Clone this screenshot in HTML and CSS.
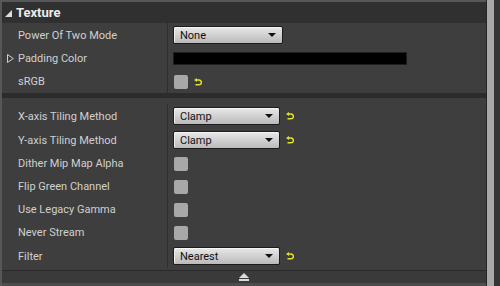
FILE: index.html
```html
<!DOCTYPE html>
<html lang="en">

<head>
    <meta charset="UTF-8">
    <title>Texture</title>
    <link rel="stylesheet" href="styles.css">
</head>

<body>
    <div class="panel">
        <div class="main">

            <!-- category header -->
            <div class="header"><span class="caret"></span>Texture</div>

            <!-- basic group -->
            <div class="group">
                <div class="row tall">
                    <div class="label">Power Of Two Mode</div>
                    <div class="value">
                        <div class="combo wide"><span>None</span><i class="arrow"></i></div>
                    </div>
                </div>
                <div class="row">
                    <div class="label">
                        <svg class="expander" width="7" height="9" viewBox="0 0 7 9">
                            <polygon points="0.5,0.5 6.3,4.5 0.5,8.5" fill="none" stroke="#cfcfcf" stroke-width="1" />
                        </svg>
                        Padding Color
                    </div>
                    <div class="value"><div class="swatch"></div></div>
                </div>
                <div class="row">
                    <div class="label">sRGB</div>
                    <div class="value">
                        <div class="check"></div>
                        <svg class="reset" width="8" height="8" viewBox="0 0 8 8">
                            <polygon points="0,2 3,0 3,4" fill="#e2e22a" />
                            <path d="M2.5 2 H5 A2.4 2.4 0 0 1 5 6.8 H1.5" fill="none" stroke="#e2e22a" stroke-width="1.5" />
                        </svg>
                    </div>
                </div>
            </div>

            <div class="sep"></div>

            <!-- advanced group -->
            <div class="group advanced">
                <div class="row tall">
                    <div class="label">X-axis Tiling Method</div>
                    <div class="value">
                        <div class="combo"><span>Clamp</span><i class="arrow"></i></div>
                        <svg class="reset" width="8" height="8" viewBox="0 0 8 8">
                            <polygon points="0,2 3,0 3,4" fill="#e2e22a" />
                            <path d="M2.5 2 H5 A2.4 2.4 0 0 1 5 6.8 H1.5" fill="none" stroke="#e2e22a" stroke-width="1.5" />
                        </svg>
                    </div>
                </div>
                <div class="row tall">
                    <div class="label">Y-axis Tiling Method</div>
                    <div class="value">
                        <div class="combo"><span>Clamp</span><i class="arrow"></i></div>
                        <svg class="reset" width="8" height="8" viewBox="0 0 8 8">
                            <polygon points="0,2 3,0 3,4" fill="#e2e22a" />
                            <path d="M2.5 2 H5 A2.4 2.4 0 0 1 5 6.8 H1.5" fill="none" stroke="#e2e22a" stroke-width="1.5" />
                        </svg>
                    </div>
                </div>
                <div class="row">
                    <div class="label">Dither Mip Map Alpha</div>
                    <div class="value"><div class="check"></div></div>
                </div>
                <div class="row">
                    <div class="label">Flip Green Channel</div>
                    <div class="value"><div class="check"></div></div>
                </div>
                <div class="row">
                    <div class="label">Use Legacy Gamma</div>
                    <div class="value"><div class="check"></div></div>
                </div>
                <div class="row">
                    <div class="label">Never Stream</div>
                    <div class="value"><div class="check"></div></div>
                </div>
                <div class="row tall">
                    <div class="label">Filter</div>
                    <div class="value">
                        <div class="combo"><span>Nearest</span><i class="arrow"></i></div>
                        <svg class="reset" width="8" height="8" viewBox="0 0 8 8">
                            <polygon points="0,2 3,0 3,4" fill="#e2e22a" />
                            <path d="M2.5 2 H5 A2.4 2.4 0 0 1 5 6.8 H1.5" fill="none" stroke="#e2e22a" stroke-width="1.5" />
                        </svg>
                    </div>
                </div>
            </div>

            <!-- collapse advanced -->
            <div class="footer">
                <svg width="10" height="8" viewBox="0 0 10 8">
                    <polygon points="5,0 10,5 0,5" fill="#dcdcdc" />
                    <rect x="0" y="6" width="10" height="2" fill="#dcdcdc" />
                </svg>
            </div>
        </div>

        <!-- scrollbar -->
        <div class="scroll">
            <div class="thumb"></div>
            <div class="track"></div>
        </div>
    </div>
</body>

</html>
```

FILE: styles.css
```css
body {
    margin: 0;
    background: #3d3d3d;
    font-family: Roboto, sans-serif;
}

.panel {
    display: flex;
    width: 500px;
    height: 286px;
}

.main {
    flex: 0 0 486px;
    display: flex;
    flex-direction: column;
    box-sizing: border-box;
    border-left: 2px solid #575757;
    border-top: 2px solid #575757;
}

.header {
    height: 21px;
    display: flex;
    align-items: center;
    padding-left: 3px;
    background: #303030;
    color: #ececec;
    font-size: 13px;
    font-weight: bold;
}

.caret {
    width: 0;
    height: 0;
    border-left: 7px solid transparent;
    border-bottom: 7px solid #dedede;
    margin-right: 4px;
    margin-top: 1px;
}

.group {
    background: #3e3e3e;
}

.advanced {
    padding-top: 6px;
    padding-bottom: 2px;
}

.sep {
    height: 5px;
    background: #2c2c2c;
}

.row {
    display: flex;
    height: 23px;
}

.row.tall {
    height: 24px;
}

.label {
    width: 166px;
    box-sizing: border-box;
    padding-left: 16px;
    border-right: 1px solid #2e2e2e;
    display: flex;
    align-items: center;
    color: #d0d0d0;
    font-size: 11px;
}

.expander {
    margin-left: -11px;
    margin-right: 4px;
}

.value {
    flex: 1;
    display: flex;
    align-items: center;
    padding-left: 5px;
}

.combo {
    width: 107px;
    height: 18px;
    box-sizing: border-box;
    display: flex;
    align-items: center;
    justify-content: space-between;
    padding: 0 6px 0 6px;
    border: 1px solid #1c1c1c;
    border-radius: 2px;
    background: linear-gradient(#e8e8e8, #bababa);
    box-shadow: inset 0 1px 0 #f6f6f6, inset 1px 0 0 #f0f0f0;
    color: #111;
    font-size: 11px;
}

.combo.wide {
    width: 110px;
}

.arrow {
    width: 0;
    height: 0;
    border-left: 4px solid transparent;
    border-right: 4px solid transparent;
    border-top: 4px solid #111;
}

.swatch {
    width: 234px;
    height: 13px;
    box-sizing: border-box;
    background: #000;
    border: 1px solid #1e1e1e;
}

.check {
    width: 14px;
    height: 14px;
    margin-left: 1px;
    border-radius: 2px;
    background: #a8a8a8;
}

.reset {
    margin-left: 6px;
}

.footer {
    flex: 1;
    display: flex;
    align-items: center;
    justify-content: center;
    border-top: 1px solid #2a2a2a;
    border-bottom: 3px solid #4c4c4c;
    background: #3a3a3a;
}

.scroll {
    flex: 1;
    display: flex;
    border-left: 1px solid #262626;
}

.thumb {
    width: 7px;
    background: #a9a9a9;
}

.track {
    flex: 1;
    background: #353535;
}
```
